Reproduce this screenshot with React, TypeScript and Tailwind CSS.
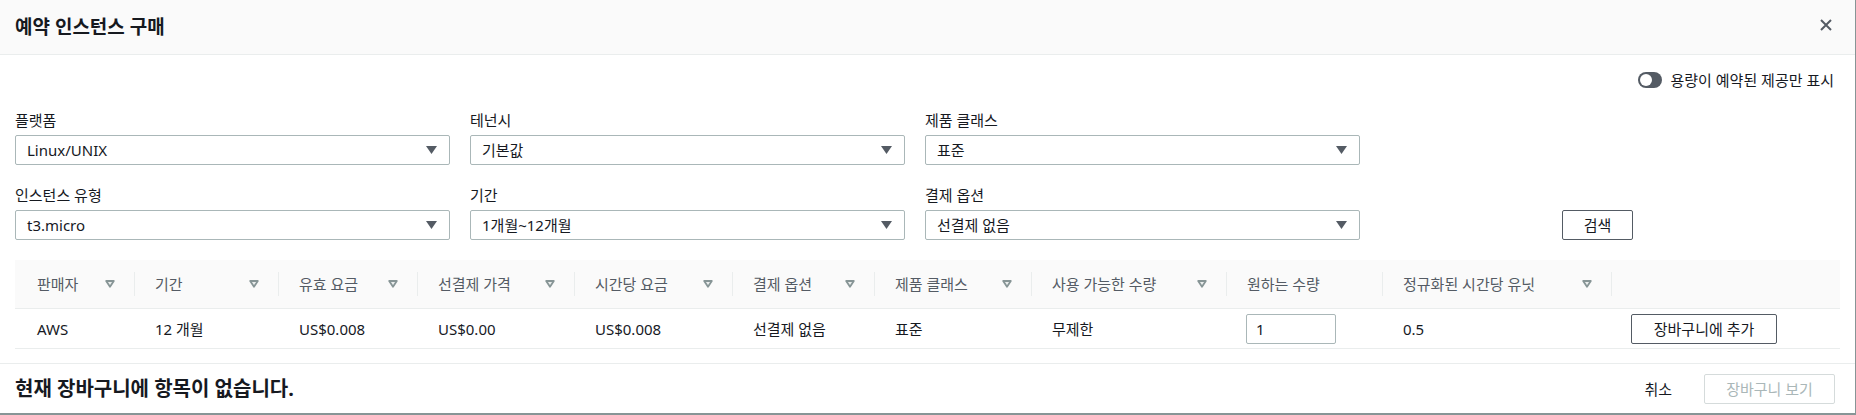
import { useState } from 'react';

// Reserved instance purchase dialog

interface Column {
  label: string;
  sortable: boolean;
}

const columns: Column[] = [
  { label: '판매자', sortable: true },
  { label: '기간', sortable: true },
  { label: '유효 요금', sortable: true },
  { label: '선결제 가격', sortable: true },
  { label: '시간당 요금', sortable: true },
  { label: '결제 옵션', sortable: true },
  { label: '제품 클래스', sortable: true },
  { label: '사용 가능한 수량', sortable: true },
  { label: '원하는 수량', sortable: false },
  { label: '정규화된 시간당 유닛', sortable: true },
  { label: '', sortable: false },
];

const row = ['AWS', '12 개월', 'US$0.008', 'US$0.00', 'US$0.008', '선결제 없음', '표준', '무제한'];

const GRID =
  'grid grid-cols-[119px_144px_139px_157px_158px_142px_157px_195px_156px_229px_224px]';

function CaretDown() {
  return (
    <svg width="11" height="8" viewBox="0 0 11 8" aria-hidden="true">
      <polygon points="0,0 11,0 5.5,8" fill="#545b64" />
    </svg>
  );
}

function SortIcon() {
  return (
    <svg width="10" height="8" viewBox="0 0 10 8" aria-hidden="true" className="ml-auto mr-[19px]">
      <polygon points="1.2,1 8.8,1 5,6.8" fill="#eaeded" stroke="#879596" strokeWidth="1.8" strokeLinejoin="round" />
    </svg>
  );
}

function Select({ label, value }: { label: string; value: string }) {
  return (
    <div className="flex w-[435px] flex-col">
      <label className="h-[20px] text-[15px] leading-[20px] text-[#16191f]">{label}</label>
      <div className="mt-[5px] flex h-[30px] items-center justify-between rounded-[2px] border border-[#aab7b8] bg-white pl-[11px] pr-[12px]">
        <span className="text-[15px] leading-[20px] text-[#16191f]">{value}</span>
        <CaretDown />
      </div>
    </div>
  );
}

export default function App() {
  const [qty, setQty] = useState('1');

  return (
    <div className="flex h-[415px] w-full flex-col border-b-2 border-r border-[#879596] bg-white font-['Noto_Sans','Noto_Sans_CJK_KR',sans-serif] text-[#16191f]">
      {/* Header */}
      <div className="flex h-[55px] shrink-0 items-center justify-between border-b border-[#eaeded] bg-[#fafafa] pl-[15px] pr-[23px]">
        <h2 className="text-[19px] font-bold leading-[24px] text-[#16191f]">예약 인스턴스 구매</h2>
        <svg width="12" height="12" viewBox="0 0 12 12" aria-hidden="true" className="-mt-[4px]">
          <path d="M1 1L11 11M11 1L1 11" stroke="#545b64" strokeWidth="2" />
        </svg>
      </div>

      {/* Capacity toggle */}
      <div className="mt-[17px] flex h-[16px] items-center justify-end gap-[8px] pr-[21px]">
        <div className="flex h-[16px] w-[24px] items-center rounded-full bg-[#545b64] pl-[2px]">
          <div className="h-[12px] w-[12px] rounded-full bg-white" />
        </div>
        <span className="text-[15px] leading-[20px]">용량이 예약된 제공만 표시</span>
      </div>

      {/* Filters */}
      <div className="mt-[22px] flex gap-[20px] px-[15px]">
        <Select label="플랫폼" value="Linux/UNIX" />
        <Select label="테넌시" value="기본값" />
        <Select label="제품 클래스" value="표준" />
      </div>
      <div className="mt-[20px] flex items-end gap-[20px] px-[15px]">
        <Select label="인스턴스 유형" value="t3.micro" />
        <Select label="기간" value="1개월~12개월" />
        <Select label="결제 옵션" value="선결제 없음" />
        <button
          type="button"
          className="ml-[182px] h-[30px] w-[71px] rounded-[2px] border border-[#545b64] bg-white text-[15px] leading-[20px] text-[#16191f]"
        >
          검색
        </button>
      </div>

      {/* Offerings table */}
      <div className="mx-[15px] mt-[20px]">
        <div className={`${GRID} h-[49px] border-b border-[#eaeded] bg-[#fafafa]`}>
          {columns.map((col, i) => (
            <div key={i} className="flex items-center">
              {i > 0 && <span className="h-[24px] w-px bg-[#eaeded]" />}
              <span className={`${i === 0 ? 'pl-[22px]' : 'pl-[20px]'} text-[15px] leading-[20px] text-[#545b64]`}>
                {col.label}
              </span>
              {col.sortable && <SortIcon />}
            </div>
          ))}
        </div>
        <div className={`${GRID} h-[40px] border-b border-[#eaeded]`}>
          {row.map((cell, i) => (
            <div
              key={i}
              className={`flex items-center ${i === 0 ? 'pl-[22px]' : 'pl-[21px]'} text-[15px] leading-[20px]`}
            >
              {cell}
            </div>
          ))}
          <div className="flex items-center pl-[20px]">
            <input
              value={qty}
              onChange={(e) => setQty(e.target.value)}
              className="h-[30px] w-[90px] rounded-[2px] border border-[#aab7b8] px-[9px] text-[15px] leading-[20px] text-[#16191f] outline-none"
            />
          </div>
          <div className="flex items-center pl-[21px] text-[15px] leading-[20px]">0.5</div>
          <div className="flex items-center pl-[20px]">
            <button
              type="button"
              className="h-[30px] w-[146px] rounded-[2px] border border-[#545b64] bg-white text-[15px] leading-[20px] text-[#16191f]"
            >
              장바구니에 추가
            </button>
          </div>
        </div>
      </div>

      {/* Footer */}
      <div className="mt-[14px] flex h-[50px] shrink-0 items-center justify-between border-t border-[#eaeded] pl-[15px] pr-[20px]">
        <span className="text-[20px] font-bold leading-[24px]">현재 장바구니에 항목이 없습니다.</span>
        <div className="flex items-center gap-[32px]">
          <button type="button" className="text-[15px] leading-[20px] text-[#16191f]">
            취소
          </button>
          <button
            type="button"
            disabled
            className="h-[30px] w-[131px] rounded-[2px] border border-[#d5dbdb] bg-white text-[15px] leading-[20px] text-[#aab7b8]"
          >
            장바구니 보기
          </button>
        </div>
      </div>
    </div>
  );
}
